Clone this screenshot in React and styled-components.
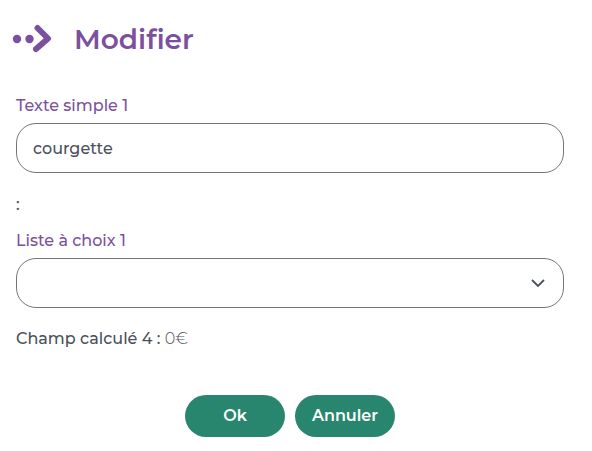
import React, { useState } from 'react';
import styled, { createGlobalStyle } from 'styled-components';

export default function App() {
  const [texte, setTexte] = useState('courgette');
  const [choix, setChoix] = useState('');

  return (
    <>
      <GlobalStyle />
      <Page>
        <Header>
          <ArrowIcon viewBox="0 0 40 30" aria-hidden="true">
            <circle cx="5" cy="15" r="4.2" />
            <circle cx="17.5" cy="15" r="4.2" />
            <path d="M25.5 4L36 14.500L24 25" />
          </ArrowIcon>
          <Title>Modifier</Title>
        </Header>
        <Form onSubmit={(e) => e.preventDefault()}>
          <Field>
            <Label htmlFor="texte">Texte simple 1</Label>
            <Input
              id="texte"
              type="text"
              value={texte}
              onChange={(e) => setTexte(e.target.value)}
            />
          </Field>
          <Separator>:</Separator>
          <Field>
            <Label htmlFor="liste">Liste à choix 1</Label>
            <SelectBox>
              <Select id="liste" value={choix} onChange={(e) => setChoix(e.target.value)}>
                <option value=""></option>
              </Select>
              <Chevron viewBox="0 0 14 8" aria-hidden="true">
                <path d="M1 1L7 7L13 1" />
              </Chevron>
            </SelectBox>
          </Field>
          <Computed>
            Champ calculé 4 : <Value>0€</Value>
          </Computed>
          <Actions>
            <Button type="submit">Ok</Button>
            <Button type="button">Annuler</Button>
          </Actions>
        </Form>
      </Page>
    </>
  );
}

const GlobalStyle = createGlobalStyle`
  * {
    box-sizing: border-box;
  }

  body {
    margin: 0;
    background-color: #ffffff;
    color: #4a505c;
    font-family: Montserrat, Inter, "Liberation Sans", sans-serif;
    font-size: 16px;
    font-weight: 500;
    line-height: 24px;
  }
`;

const Page = styled.main`
  padding: 20px 28px 14px 16px;
`;

const Header = styled.header`
  display: flex;
  align-items: center;
  gap: 22px;
  margin-left: -4px;
`;

const ArrowIcon = styled.svg`
  width: 40px;
  height: 30px;
  fill: #7b519d;

  path {
    fill: none;
    stroke: #7b519d;
    stroke-width: 6;
    stroke-linecap: round;
    stroke-linejoin: round;
  }
`;

const Title = styled.h1`
  margin: 0;
  color: #7b519d;
  font-size: 28px;
  font-weight: 600;
  line-height: 38px;
`;

const Form = styled.form`
  margin-top: 36px;
`;

const Field = styled.div`
  display: flex;
  flex-direction: column;
  gap: 5px;
`;

const Label = styled.label`
  color: #7b519d;
`;

const Input = styled.input`
  width: 100%;
  height: 50px;
  padding: 0 16px;
  border: 1px solid #757575;
  border-radius: 20px;
  background-color: #ffffff;
  color: inherit;
  font: inherit;
`;

const Separator = styled.p`
  margin: 20px 0 12px;
`;

const SelectBox = styled.div`
  position: relative;
`;

const Select = styled.select`
  display: block;
  width: 100%;
  height: 50px;
  padding: 0 40px 0 16px;
  border: 1px solid #757575;
  border-radius: 20px;
  background-color: #ffffff;
  color: inherit;
  font: inherit;
  appearance: none;
`;

const Chevron = styled.svg`
  position: absolute;
  top: 21px;
  right: 19px;
  width: 14px;
  height: 8px;
  pointer-events: none;

  path {
    fill: none;
    stroke: #4a505c;
    stroke-width: 1.8;
  }
`;

const Computed = styled.p`
  margin: 19px 0 0;
`;

const Value = styled.span`
  font-weight: 300;
`;

const Actions = styled.div`
  display: flex;
  justify-content: center;
  gap: 10px;
  margin-top: 44px;
`;

const Button = styled.button`
  min-width: 100px;
  height: 42px;
  padding: 0 15px;
  border: none;
  border-radius: 21px;
  background-color: #28866e;
  color: #ffffff;
  font: inherit;
  font-weight: 600;
  cursor: pointer;
`;
